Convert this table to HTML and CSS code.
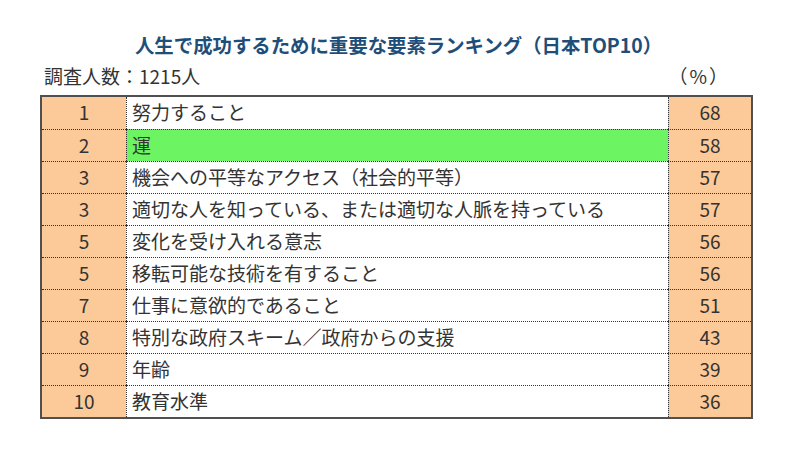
FILE: index.html
```html
<!DOCTYPE html>
<html lang="ja">
<head>
<meta charset="utf-8">
<link rel="stylesheet" href="styles.css">
</head>
<body>
<div class="page">
  <h1 class="title">人生で成功するために重要な要素ランキング（日本TOP10）</h1>
  <div class="meta">
    <span class="count">調査人数：1215人</span>
    <span class="unit">（%）</span>
  </div>
  <div class="table">
    <div class="row"><div class="c rank">1</div><div class="c item">努力すること</div><div class="c val">68</div></div>
    <div class="row"><div class="c rank">2</div><div class="c item hl">運</div><div class="c val">58</div></div>
    <div class="row"><div class="c rank">3</div><div class="c item">機会への平等なアクセス（社会的平等）</div><div class="c val">57</div></div>
    <div class="row"><div class="c rank">3</div><div class="c item">適切な人を知っている、または適切な人脈を持っている</div><div class="c val">57</div></div>
    <div class="row"><div class="c rank">5</div><div class="c item">変化を受け入れる意志</div><div class="c val">56</div></div>
    <div class="row"><div class="c rank">5</div><div class="c item">移転可能な技術を有すること</div><div class="c val">56</div></div>
    <div class="row"><div class="c rank">7</div><div class="c item">仕事に意欲的であること</div><div class="c val">51</div></div>
    <div class="row"><div class="c rank">8</div><div class="c item">特別な政府スキーム／政府からの支援</div><div class="c val">43</div></div>
    <div class="row"><div class="c rank">9</div><div class="c item">年齢</div><div class="c val">39</div></div>
    <div class="row"><div class="c rank">10</div><div class="c item">教育水準</div><div class="c val">36</div></div>
  </div>
</div>
</body>
</html>
```
FILE: styles.css
```css
* { box-sizing: border-box; }
html, body { margin: 0; padding: 0; background: #fff; }
body {
  width: 800px;
  height: 450px;
  overflow: hidden;
  font-family: "Noto Sans CJK JP", "Noto Sans", sans-serif;
  color: #333;
}
.page {
  padding: 32px 0 0 40px;
  width: 753px;
}
.title {
  margin: 0;
  font-size: 19.4px;
  font-weight: bold;
  color: #1f4e79;
  text-align: center;
  line-height: 26px;
  padding-left: 4px;
}
.meta {
  display: flex;
  justify-content: space-between;
  align-items: center;
  height: 37px;
  padding: 0 23px 2px 4px;
  font-size: 19px;
  color: #333;
}
.unit { letter-spacing: 2px; }
.table {
  border: 2px solid #505050;
  display: flex;
  flex-direction: column;
}
.row {
  display: grid;
  grid-template-columns: 84px 542px 83px;
  height: 32px;
}
.row + .row .c { border-top: 1px dotted #333; }
.c {
  font-size: 19px;
  line-height: 30px;
  height: 32px;
  white-space: nowrap;
}
.rank, .val {
  background: #fcc998;
  text-align: center;
}
.item {
  border-left: 1px dotted #333;
  padding-left: 5px;
  background: #fff;
}
.item.hl { background: #6cf463; }
.val { border-left: 1px dotted #333; }
```
